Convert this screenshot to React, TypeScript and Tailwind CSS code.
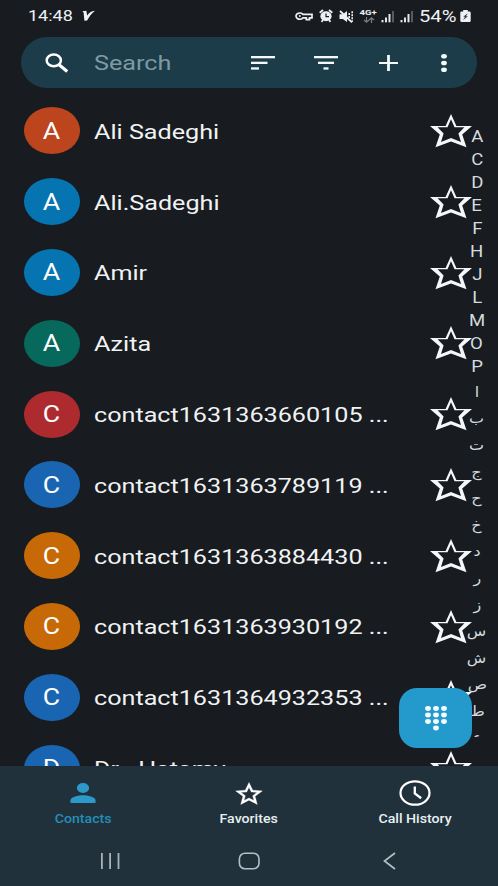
import React from "react";

const contacts = [
    { name: "Ali Sadeghi", letter: "A", color: "bg-[#bd451d]" },
    { name: "Ali.Sadeghi", letter: "A", color: "bg-[#0574b1]" },
    { name: "Amir", letter: "A", color: "bg-[#0574b1]" },
    { name: "Azita", letter: "A", color: "bg-[#07695c]" },
    { name: "contact1631363660105 ...", letter: "C", color: "bg-[#ad2b2e]" },
    { name: "contact1631363789119 ...", letter: "C", color: "bg-[#1a65b2]" },
    { name: "contact1631363884430 ...", letter: "C", color: "bg-[#c66906]" },
    { name: "contact1631363930192 ...", letter: "C", color: "bg-[#c66906]" },
    { name: "contact1631364932353 ...", letter: "C", color: "bg-[#1a65b2]" },
    { name: "Dr . Hatamy", letter: "D", color: "bg-[#1a65b2]" },
];

const latinIndex = ["A", "C", "D", "E", "F", "H", "J", "L", "M", "O", "P"];
const arabicIndex = ["ا", "ب", "ت", "ج", "ح", "خ", "د", "ر", "ز", "س", "ش", "ص", "ط", "ع"];

function StarOutline() {
    return (
        <svg className="w-[42px] h-[34px] shrink-0" viewBox="0 0 42 34" fill="#f4f8fa">
            <path
                fillRule="evenodd"
                d="M21 0 26.4 12H42L32.2 20.6 36.5 33.2 21 27.6 5.5 33.2 9.8 20.6 0 12H15.6ZM21 5.2 17.5 13.3H7.6L13.6 19.6 11 28 21 23.9 31 28 28.4 19.6 34.4 13.3H24.5Z"
            />
        </svg>
    );
}

function SignalIcon() {
    return (
        <svg className="w-[14px] h-[13px]" viewBox="0 0 14 13" fill="#e4e7e9">
            <rect x="0.5" y="10" width="2" height="2.3" />
            <rect x="4" y="7.5" width="2" height="4.8" />
            <rect x="7.5" y="4" width="2" height="8.3" />
            <rect x="11" y="1" width="2" height="11.3" fill="#555b60" />
        </svg>
    );
}

function StatusBar() {
    return (
        <div className="h-[37px] pt-[5px] shrink-0 flex justify-between text-[#eef1f3]">
            <div className="h-[22px] pl-[27.5px] flex items-center">
                <span className="w-[54px] pt-px text-[15px]">
                    <span className="inline-block origin-left scale-x-[1.2]">14:48</span>
                </span>
                <svg className="w-[13px] h-[12px]" viewBox="0 0 13 12" fill="#f1f4f5">
                    <path d="M0.3 1.2 4.3 0.8 5.2 5.4Q7.5 1.4 13 0.7 9 3.4 5.1 10.6L2.4 10.8 1.6 2.6Z" />
                </svg>
            </div>
            <div className="h-[22px] pr-[27px] flex items-center">
                <svg className="w-[18px] h-[12px] mr-[6px]" viewBox="0 0 18 12" fill="none" stroke="#eef1f3" strokeWidth="1.7">
                    <path d="M8 4.4A3.8 3.1 0 1 0 8 7.8H11.3V9.7H14.5V7.8H17V4.4Z" />
                    <circle cx="4.8" cy="6.1" r="1" fill="#eef1f3" stroke="none" />
                </svg>
                <svg className="w-[14px] h-[14px] mr-[6px]" viewBox="0 0 14 14">
                    <path d="M0.7 3.8 4 1M13.3 3.8 10 1M2.5 12.8 4 11M11.5 12.8 10 11" stroke="#eef1f3" strokeWidth="1.8" />
                    <ellipse cx="7" cy="7.3" rx="5.6" ry="5" fill="#eef1f3" />
                    <path d="M7 4.4V7.7H10" fill="none" stroke="#181b1f" strokeWidth="1.2" />
                </svg>
                <svg className="w-[15px] h-[13px] mr-[6px]" viewBox="0 0 15 13" fill="#eef1f3">
                    <path d="M0.5 4.2H3.8L8 1V12L3.8 8.9H0.5Z" />
                    <path d="M1 1 13 12.3" stroke="#eef1f3" strokeWidth="1.8" />
                    <path d="M10.2 3V10.3M13.2 1.2V11.8" stroke="#eef1f3" strokeWidth="1.6" strokeDasharray="2 1" />
                </svg>
                <div className="w-[17px] h-[15px] mr-[4px] flex flex-col items-center">
                    <span className="text-[8px] leading-[8px] font-bold scale-x-[1.2]">4G+</span>
                    <svg className="w-[12px] h-[6px]" viewBox="0 0 12 6" fill="none" stroke="#777e83" strokeWidth="1.2">
                        <path d="M3.5 0V5M1 3 3.5 5.2 6 3M8.5 6V1M6.2 3 8.5 0.8 11 3" />
                    </svg>
                </div>
                <div className="flex gap-[5px] mr-[5px]">
                    <SignalIcon />
                    <SignalIcon />
                </div>
                <span className="w-[41px] pt-px text-[16px]">
                    <span className="inline-block origin-left scale-x-[1.26]">54%</span>
                </span>
                <svg className="w-[11px] h-[12px]" viewBox="0 0 11 12" fill="#eef1f3">
                    <path d="M3.2 0H7.8V1.5H9.5Q10.7 1.5 10.7 2.7V10.7Q10.7 12 9.5 12H1.5Q.3 12 .3 10.7V2.7Q.3 1.5 1.5 1.5H3.2Z" />
                    <path d="M7.8 3.2 3.2 6.8H5L3 10 8 6.2H6Z" fill="#31363a" />
                </svg>
            </div>
        </div>
    );
}

function SearchBar() {
    return (
        <div className="h-[51px] mx-[21px] shrink-0 rounded-full bg-[#1c3c49] flex items-center">
            <svg className="w-[24px] h-[20px] ml-[24px] mr-[25px]" viewBox="0 0 24 20" fill="none" stroke="#fff">
                <ellipse cx="8.8" cy="7.4" rx="7.1" ry="5.9" strokeWidth="2.5" />
                <path d="M13.8 11.6 22.2 18.4" strokeWidth="3.2" />
            </svg>
            <span className="w-[157px] pt-[3px] text-[21px] text-[#7e9aa5]">
                <span className="inline-block origin-left scale-x-[1.2]">Search</span>
            </span>
            <svg className="w-[24px] h-[14px] mr-[39px]" viewBox="0 0 24 14" fill="#f4f9fa">
                <rect width="24" height="2.3" />
                <rect y="5.7" width="16.5" height="2.3" />
                <rect y="11.3" width="8" height="2.3" />
            </svg>
            <svg className="w-[24px] h-[14px] mr-[41px]" viewBox="0 0 24 14" fill="#f4f9fa">
                <rect width="24" height="2.3" />
                <rect x="4" y="5.7" width="16" height="2.3" />
                <rect x="9.5" y="11.3" width="5" height="2.3" />
            </svg>
            <svg className="w-[19px] h-[16px] mr-[43px]" viewBox="0 0 19 16" fill="#f4f9fa">
                <path d="M8.1 0H10.9V6.9H19V9.1H10.9V16H8.1V9.1H0V6.9H8.1Z" />
            </svg>
            <svg className="w-[6px] h-[18px]" viewBox="0 0 6 18" fill="#f4f9fa">
                <ellipse cx="3" cy="2.3" rx="2.9" ry="2.3" />
                <ellipse cx="3" cy="9" rx="2.9" ry="2.3" />
                <ellipse cx="3" cy="15.7" rx="2.9" ry="2.3" />
            </svg>
        </div>
    );
}

function ContactList() {
    return (
        <div className="pt-[7.6px]">
            {contacts.map((contact) => (
                <div key={contact.name} className="h-[70.8px] pl-[23.5px] pr-[26px] flex items-center">
                    <div
                        className={`w-[56.5px] h-[47px] shrink-0 rounded-[50%] flex items-center justify-center text-white text-[23px] ${contact.color}`}
                    >
                        <span className="pt-[2px] scale-x-[1.16]">{contact.letter}</span>
                    </div>
                    <div className="flex-1 pl-[13.5px] pt-[3px] text-[21px] whitespace-nowrap text-[#f0f3f4]">
                        <span className="inline-block origin-left scale-x-[1.198]">{contact.name}</span>
                    </div>
                    <StarOutline />
                </div>
            ))}
        </div>
    );
}

function AlphabetIndex() {
    return (
        <div className="absolute right-[6px] top-[37px] w-[30px] h-[612px] overflow-hidden flex flex-col text-[16px] text-[#d5dbdf]">
            {latinIndex.map((letter) => (
                <div key={letter} className="h-[23.1px] shrink-0 flex items-center justify-center">
                    <span className="scale-x-[1.16]">{letter}</span>
                </div>
            ))}
            {arabicIndex.map((letter) => (
                <div key={letter} className="h-[26.6px] shrink-0 flex items-center justify-center text-[14px]">
                    <span className="scale-x-[1.14]">{letter}</span>
                </div>
            ))}
        </div>
    );
}

function DialButton() {
    return (
        <button className="absolute left-[399px] top-[600px] w-[73px] h-[60px] rounded-[18px] bg-[#239acb] flex items-center justify-center">
            <svg className="w-[22px] h-[25px]" viewBox="0 0 22 25" fill="#f3fbfe">
                {[2.5, 9, 15.5].map((y) => (
                    <React.Fragment key={y}>
                        {[3, 11, 19].map((x) => (
                            <ellipse key={x} cx={x} cy={y} rx="2.9" ry="2.4" />
                        ))}
                    </React.Fragment>
                ))}
                <ellipse cx="11" cy="22" rx="2.9" ry="2.4" />
            </svg>
        </button>
    );
}

function BottomTabs() {
    return (
        <div className="h-[70px] shrink-0 grid grid-cols-3 text-[12px] font-medium text-[#e8eff2]">
            <div className="flex flex-col items-center text-[#258dba]">
                <div className="h-[45px] pt-[9px] flex items-center">
                    <svg className="w-[26px] h-[20px]" viewBox="0 0 26 20" fill="#2b9ac9">
                        <ellipse cx="13" cy="5" rx="6.1" ry="5" />
                        <path d="M0.5 20V17.3C0.5 13.8 8.5 12.2 13 12.2S25.5 13.8 25.5 17.3V20Z" />
                    </svg>
                </div>
                <span className="leading-[17px] scale-x-[1.18]">Contacts</span>
            </div>
            <div className="flex flex-col items-center">
                <div className="h-[45px] pt-[9px] flex items-center">
                    <svg className="w-[28px] h-[23px]" viewBox="1.5 1.5 21 20" preserveAspectRatio="none" fill="#fff" stroke="#fff" strokeWidth="0.3">
                        <path d="m22 9.24-7.19-.62L12 2 9.19 8.63 2 9.24l5.46 4.73L5.82 21 12 17.27 18.18 21l-1.63-7.03L22 9.24zM12 15.4l-3.76 2.27 1-4.28-3.32-2.88 4.38-.38L12 6.1l1.71 4.04 4.38.38-3.32 2.88 1 4.28L12 15.4z" />
                    </svg>
                </div>
                <span className="leading-[17px] scale-x-[1.18]">Favorites</span>
            </div>
            <div className="flex flex-col items-center">
                <div className="h-[45px] pt-[9px] flex items-center">
                    <svg className="w-[32px] h-[26px]" viewBox="0 0 32 26" fill="none" stroke="#fff">
                        <ellipse cx="16" cy="13" rx="14.5" ry="11.7" strokeWidth="2.2" />
                        <path d="M15.8 6.5V13.5L22.2 18.2" strokeWidth="2.3" />
                    </svg>
                </div>
                <span className="leading-[17px] scale-x-[1.18] whitespace-nowrap">Call History</span>
            </div>
        </div>
    );
}

function SystemNav() {
    return (
        <div className="h-[50px] shrink-0 flex items-center pl-[100px]">
            <svg className="w-[20px] h-[18px] mr-[118px]" viewBox="0 0 20 18" fill="#a9b1b6">
                <rect x="1" y="1" width="1.8" height="16" />
                <rect x="9.2" y="1" width="1.8" height="16" />
                <rect x="17.6" y="1" width="1.8" height="16" />
            </svg>
            <svg className="w-[22px] h-[18px] mr-[122px]" viewBox="0 0 22 18" fill="none" stroke="#b7bec2" strokeWidth="1.6">
                <rect x="1.4" y="1.2" width="19.6" height="15.6" rx="5.5" />
            </svg>
            <svg className="w-[14px] h-[18px]" viewBox="0 0 14 18" fill="none" stroke="#b7bec2" strokeWidth="1.7">
                <path d="M13 1 2.5 9 13 17" />
            </svg>
        </div>
    );
}

export default function App() {
    return (
        <div className="w-[498px] h-[886px] overflow-hidden flex flex-col bg-[#181b1f] font-[Roboto,'DejaVu_Sans',sans-serif]">
            <StatusBar />
            <SearchBar />
            <div className="relative h-[678px] shrink-0 overflow-hidden">
                <ContactList />
                <AlphabetIndex />
                <DialButton />
            </div>
            <div className="h-[120px] shrink-0 bg-[#20313b]">
                <BottomTabs />
                <SystemNav />
            </div>
        </div>
    );
}
